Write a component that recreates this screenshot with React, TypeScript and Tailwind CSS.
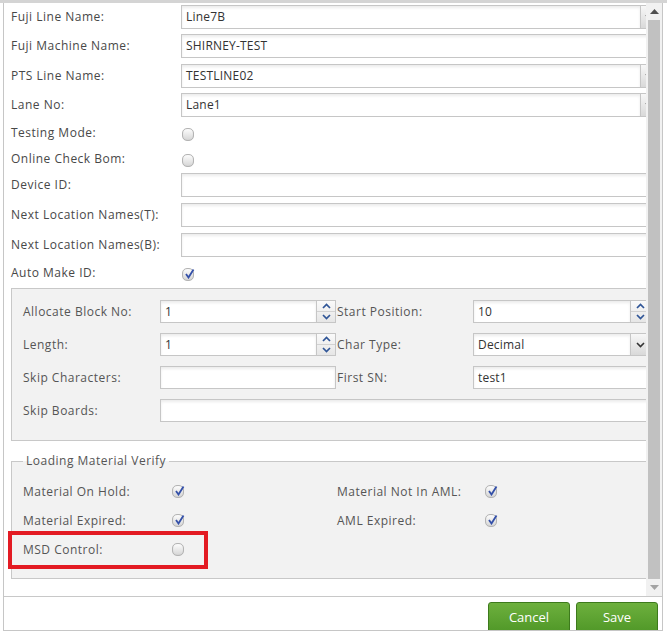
import React from 'react'

const font = "font-['Open_Sans',sans-serif]"

function Box({ value = '', className = '' }: { value?: string; className?: string }) {
  return (
    <div
      className={`flex shrink-0 items-center border border-[#c6c6c6] bg-white px-[4px] tracking-[0.2px] text-[#333] shadow-[inset_0_2px_3px_rgba(0,0,0,0.08)] ${className}`}
    >
      {value}
    </div>
  )
}

function DropButton({ className = '' }: { className?: string }) {
  return (
    <div
      className={`flex shrink-0 items-center justify-center border border-l-0 border-[#c6c6c6] bg-gradient-to-b from-[#f7f7f7] to-[#d9d9d9] ${className}`}
    >
      <svg width="9" height="6" viewBox="0 0 9 6">
        <path d="M1 1 L4.5 4.5 L8 1" fill="none" stroke="#333" strokeWidth="1.6" />
      </svg>
    </div>
  )
}

function Spinner() {
  return (
    <div className="flex h-[23px] w-[19px] shrink-0 flex-col border border-l-0 border-[#c6c6c6] bg-gradient-to-b from-[#fafafa] to-[#e6e6e6]">
      <div className="flex flex-1 items-center justify-center border-b border-[#d2d2d2]">
        <svg width="9" height="6" viewBox="0 0 9 6">
          <path d="M1 5 L4.5 1.5 L8 5" fill="none" stroke="#2f5597" strokeWidth="1.7" />
        </svg>
      </div>
      <div className="flex flex-1 items-center justify-center">
        <svg width="9" height="6" viewBox="0 0 9 6">
          <path d="M1 1 L4.5 4.5 L8 1" fill="none" stroke="#2f5597" strokeWidth="1.7" />
        </svg>
      </div>
    </div>
  )
}

function Check({ checked = false }: { checked?: boolean }) {
  return (
    <span className="relative flex h-[13px] w-[12px] shrink-0 items-center justify-center rounded-[5px] border border-[#b4b4b4] bg-gradient-to-b from-[#fdfdfd] to-[#d6d6d6] shadow-[inset_0_0_1px_rgba(0,0,0,0.15)]">
      {checked && (
        <svg width="11" height="11" viewBox="0 0 11 11" className="absolute left-[1px] top-[-1px]">
          <path d="M2 6 L4.5 9.5 L9.5 1.5" fill="none" stroke="#3450a8" strokeWidth="1.8" />
        </svg>
      )}
    </span>
  )
}

const topRows: { label: string; kind: 'select' | 'text' | 'check'; value?: string; checked?: boolean; mt: string }[] = [
  { label: 'Fuji Line Name:', kind: 'select', value: 'Line7B', mt: 'mt-0' },
  { label: 'Fuji Machine Name:', kind: 'text', value: 'SHIRNEY-TEST', mt: 'mt-[5px]' },
  { label: 'PTS Line Name:', kind: 'select', value: 'TESTLINE02', mt: 'mt-[6px]' },
  { label: 'Lane No:', kind: 'select', value: 'Lane1', mt: 'mt-[5px]' },
  { label: 'Testing Mode:', kind: 'check', mt: 'mt-[3px]' },
  { label: 'Online Check Bom:', kind: 'check', mt: 'mt-0' },
  { label: 'Device ID:', kind: 'text', mt: 'mt-[1px]' },
  { label: 'Next Location Names(T):', kind: 'text', mt: 'mt-[6px]' },
  { label: 'Next Location Names(B):', kind: 'text', mt: 'mt-[6px]' },
  { label: 'Auto Make ID:', kind: 'check', checked: true, mt: 'mt-[3px]' },
]

export default function App() {
  return (
    <div className={`h-[632px] w-[667px] overflow-hidden bg-white text-[12px] ${font}`}>
      <div className="h-[3px] w-full bg-[#d4d4d4]" />
      <div className="ml-[3px] flex h-[628px] w-[660px] flex-col border-x border-b border-[#c6c6c6]">
        {/* scroll area */}
        <div className="flex h-[594px] shrink-0 border-b border-[#c8c8c8]">
          <div className="h-full w-[642px] overflow-hidden">
            <div className="w-[700px] pt-[2px] pl-[7px] text-[#484848]">
              {topRows.map((r) => (
                <div
                  key={r.label}
                  className={`flex items-center ${r.kind === 'check' ? 'h-[26px]' : 'h-[24px]'} ${r.mt}`}
                >
                  <div className="w-[170px] shrink-0 tracking-[0.5px]">{r.label}</div>
                  {r.kind === 'check' && (
                    <div className="flex pl-[1px] pt-[2px]">
                      <Check checked={r.checked} />
                    </div>
                  )}
                  {r.kind === 'text' && <Box value={r.value} className="h-[24px] w-[477px]" />}
                  {r.kind === 'select' && (
                    <div className="flex">
                      <Box value={r.value} className="h-[24px] w-[460px]" />
                      <DropButton className="h-[24px] w-[17px]" />
                    </div>
                  )}
                </div>
              ))}

              {/* auto make id block */}
              <div className="mt-[2px] w-[650px] border border-[#c8c8c8] bg-[#f2f2f2] pt-[11px] pb-[18px] pl-[11px] text-[#555]">
                <div className="flex flex-col gap-[10px]">
                  <div className="flex h-[23px] items-center">
                    <div className="w-[137px] shrink-0 tracking-[0.5px]">Allocate Block No:</div>
                    <Box value="1" className="h-[23px] w-[157px]" />
                    <Spinner />
                    <div className="w-[137px] shrink-0 pl-[1px] tracking-[0.5px]">Start Position:</div>
                    <Box value="10" className="h-[23px] w-[158px]" />
                    <Spinner />
                  </div>
                  <div className="flex h-[23px] items-center">
                    <div className="w-[137px] shrink-0 tracking-[0.5px]">Length:</div>
                    <Box value="1" className="h-[23px] w-[157px]" />
                    <Spinner />
                    <div className="w-[137px] shrink-0 pl-[1px] tracking-[0.5px]">Char Type:</div>
                    <Box value="Decimal" className="h-[23px] w-[158px]" />
                    <DropButton className="h-[23px] w-[19px]" />
                  </div>
                  <div className="flex h-[23px] items-center">
                    <div className="w-[137px] shrink-0 tracking-[0.5px]">Skip Characters:</div>
                    <Box className="h-[23px] w-[176px]" />
                    <div className="w-[137px] shrink-0 pl-[1px] tracking-[0.5px]">First SN:</div>
                    <Box value="test1" className="h-[23px] w-[177px]" />
                  </div>
                  <div className="flex h-[23px] items-center">
                    <div className="w-[137px] shrink-0 tracking-[0.5px]">Skip Boards:</div>
                    <Box className="h-[23px] w-[491px]" />
                  </div>
                </div>
              </div>

              {/* loading material verify */}
              <fieldset className="mt-[12px] w-[650px] border border-[#c8c8c8] bg-[#f2f2f2] pl-[11px] pb-[14px] tracking-[0.5px] text-[#555]">
                <legend className="px-[3px] leading-[16px]">Loading Material Verify</legend>
                <div className="grid grid-cols-[314px_314px] pt-[8px]">
                  <div className="flex h-[29px] items-center">
                    <div className="w-[149px] shrink-0">Material On Hold:</div>
                    <Check checked />
                  </div>
                  <div className="flex h-[29px] items-center">
                    <div className="w-[148px] shrink-0">Material Not In AML:</div>
                    <Check checked />
                  </div>
                  <div className="flex h-[29px] items-center">
                    <div className="w-[149px] shrink-0">Material Expired:</div>
                    <Check checked />
                  </div>
                  <div className="flex h-[29px] items-center">
                    <div className="w-[148px] shrink-0">AML Expired:</div>
                    <Check checked />
                  </div>
                  <div className="relative flex h-[29px] items-center">
                    <div className="w-[149px] shrink-0">MSD Control:</div>
                    <Check />
                    <div className="absolute left-[-15px] top-[-4px] h-[38px] w-[200px] border-[4px] border-[#e31b23]" />
                  </div>
                </div>
              </fieldset>
            </div>
          </div>

          {/* scrollbar */}
          <div className="flex w-[16px] shrink-0 flex-col bg-[#f1f1f1]">
            <div className="flex h-[17px] shrink-0 items-center justify-center">
              <svg width="9" height="5" viewBox="0 0 9 5">
                <path d="M0 5 L4.5 0 L9 5 Z" fill="#505050" />
              </svg>
            </div>
            <div className="mx-[2px] h-[559px] shrink-0 bg-[#c1c1c1]" />
            <div className="flex flex-1 items-center justify-center">
              <svg width="9" height="5" viewBox="0 0 9 5">
                <path d="M0 0 L4.5 5 L9 0 Z" fill="#a3a3a3" />
              </svg>
            </div>
          </div>
        </div>

        {/* buttons */}
        <div className="flex flex-1 justify-end gap-[6px] overflow-hidden pt-[5px] pr-[4px]">
          <button className="h-[32px] w-[82px] rounded-t-[3px] border border-[#3d7a1c] bg-gradient-to-b from-[#6db03d] to-[#4f9727] text-[13px] text-white">
            Cancel
          </button>
          <button className="h-[32px] w-[82px] rounded-t-[3px] border border-[#3d7a1c] bg-gradient-to-b from-[#6db03d] to-[#4f9727] text-[13px] text-white">
            Save
          </button>
        </div>
      </div>
    </div>
  )
}
